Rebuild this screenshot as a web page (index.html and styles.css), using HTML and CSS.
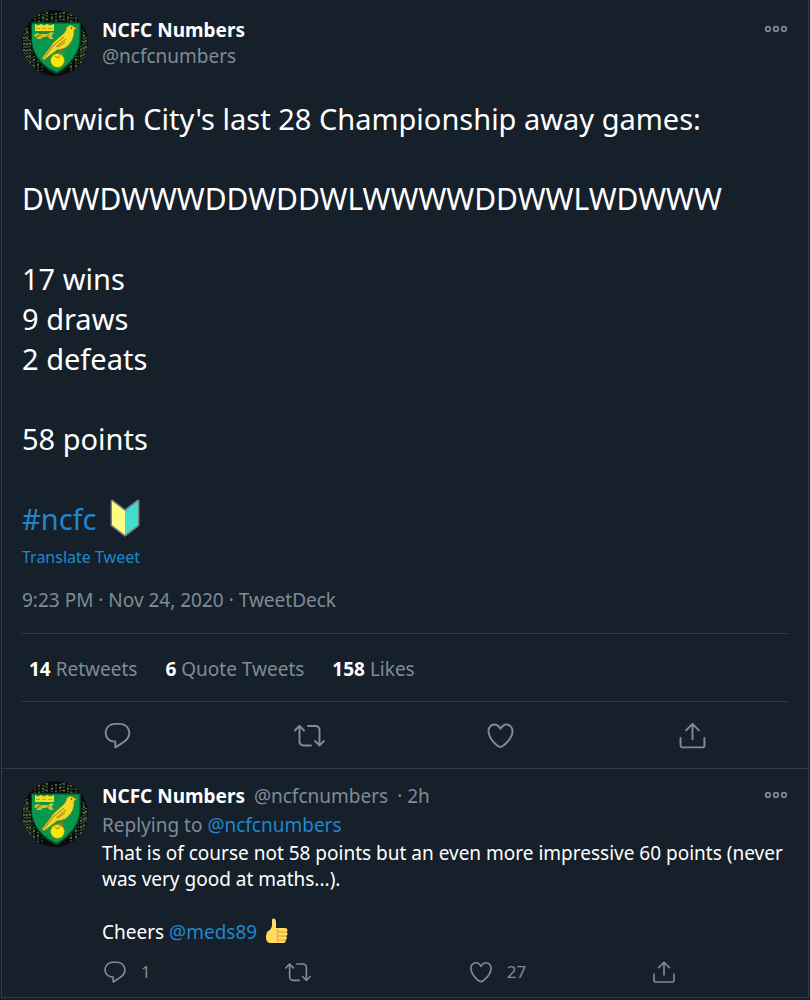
FILE: index.html
```html
<!DOCTYPE html>
<html lang="en">
<head>
<meta charset="utf-8">
<meta name="viewport" content="width=device-width, initial-scale=1">
<title>NCFC Numbers</title>
<link rel="stylesheet" href="styles.css">
</head>
<body>
<svg class="sprite" aria-hidden="true">
  <defs>
    <symbol id="reply" viewBox="0 0 24 24"><path d="M14.046 2.242l-4.148-.01h-.002c-4.374 0-7.8 3.427-7.8 7.802 0 4.098 3.186 7.206 7.465 7.37v3.828c0 .108.044.286.12.403.142.225.384.347.632.347.138 0 .277-.038.402-.118.264-.168 6.473-4.14 8.088-5.506 1.902-1.61 3.04-3.97 3.043-6.312v-.017c-.006-4.367-3.43-7.787-7.8-7.788zm3.787 12.972c-1.134.96-4.862 3.405-6.772 4.643V16.67c0-.414-.335-.75-.75-.75h-.396c-3.66 0-6.318-2.476-6.318-5.886 0-3.534 2.768-6.302 6.3-6.302l4.147.01h.002c3.532 0 6.3 2.766 6.302 6.296-.003 1.91-.942 3.844-2.514 5.176z"/></symbol>
    <symbol id="retweet" viewBox="0 0 24 24"><path d="M23.77 15.67c-.292-.293-.767-.293-1.06 0l-2.22 2.22V7.65c0-2.068-1.683-3.75-3.75-3.75h-5.85c-.414 0-.75.336-.75.75s.336.75.75.75h5.85c1.24 0 2.25 1.01 2.25 2.25v10.24l-2.22-2.22c-.293-.293-.768-.293-1.06 0s-.294.768 0 1.06l3.5 3.5c.145.147.337.22.53.22s.383-.072.53-.22l3.5-3.5c.294-.292.294-.767 0-1.06zm-10.66 3.28H7.26c-1.24 0-2.25-1.01-2.25-2.25V6.46l2.22 2.22c.148.147.34.22.532.22s.384-.073.53-.22c.293-.293.293-.768 0-1.06l-3.5-3.5c-.293-.294-.768-.294-1.06 0l-3.5 3.5c-.294.292-.294.767 0 1.06s.767.293 1.06 0l2.22-2.22V16.7c0 2.068 1.683 3.75 3.75 3.75h5.85c.414 0 .75-.336.75-.75s-.337-.75-.75-.75z"/></symbol>
    <symbol id="like" viewBox="0 0 24 24"><path d="M12 21.638h-.014C9.403 21.59 1.95 14.856 1.95 8.478c0-3.064 2.525-5.754 5.403-5.754 2.29 0 3.83 1.58 4.646 2.73.814-1.148 2.354-2.73 4.645-2.73 2.88 0 5.404 2.69 5.404 5.755 0 6.376-7.454 13.11-10.037 13.157H12zM7.354 4.225c-2.08 0-3.903 1.988-3.903 4.255 0 5.74 7.034 11.596 8.55 11.658 1.518-.062 8.55-5.917 8.55-11.658 0-2.267-1.823-4.255-3.903-4.255-2.528 0-3.94 2.936-3.952 2.965-.23.562-1.156.562-1.387 0-.014-.03-1.425-2.965-3.954-2.965z"/></symbol>
    <symbol id="share" viewBox="0 0 24 24"><path d="M17.53 7.47l-5-5c-.293-.293-.768-.293-1.06 0l-5 5c-.294.293-.294.768 0 1.06s.767.294 1.06 0l3.72-3.72V15c0 .414.336.75.75.75s.75-.336.75-.75V4.81l3.72 3.72c.146.147.338.22.53.22s.384-.072.53-.22c.293-.293.293-.767 0-1.06z"/><path d="M19.708 21.944H4.292C3.028 21.944 2 20.916 2 19.652V14c0-.414.336-.75.75-.75s.75.336.75.75v5.652c0 .437.355.792.792.792h15.416c.437 0 .792-.355.792-.792V14c0-.414.336-.75.75-.75s.75.336.75.75v5.652c0 1.264-1.028 2.292-2.292 2.292z"/></symbol>
    <symbol id="more" viewBox="0 0 24 8"><g fill="none" stroke="currentColor" stroke-width="1.7"><circle cx="4" cy="4" r="2.3"/><circle cx="12" cy="4" r="2.3"/><circle cx="20" cy="4" r="2.3"/></g></symbol>
    <clipPath id="round"><circle cx="33" cy="33" r="33"/></clipPath>
    <symbol id="crest" viewBox="0 0 66 66">
      <g clip-path="url(#round)">
        <rect width="66" height="66" fill="#080d0b"/>
        <g fill="none" stroke="#6d8a50" stroke-width="1.4">
          <path stroke-dasharray="2 1.5 1 2" d="M13 5v8M17 4v9M25 2v9M34 3v9M42 2v10M49 4v9M54 7v6"/>
          <path stroke-dasharray="1 1.6 2.4 1.2" d="M21 4v8M30 4v7M38 3v8M46 4v8M2 24v26M5 18v33M8 30v26M12 46v14M62 22v32M59 36v24M64 27v15M54 46v14M16 51v10M49 53v9"/>
          <path stroke="#34543a" stroke-dasharray="1.5 2" d="M3.500 19v32M6.500 22v33M10 40v18M60.500 20v38M56.500 42v18M20 56v8M23 1v9M51 4v8M40 2v8"/>
        </g>
        <path d="M9 12H59V29C59 44 47 58 35 64C22 60 9 46 9 29Z" fill="#07422a"/>
        <path d="M10 13.500H57.500V29C57.500 43 46 56 35 62C23 58 10 45 10 29Z" fill="#08984d"/>
        <path d="M13 14l3 1.500 3-1.500 3 1.500 3-1.500 3 1.500 4-1.500v7H13z" fill="#f1dc20"/>
        <path d="M14 18.500h4m2 0h4m2 0h4" stroke="#b5971d" stroke-width=".8"/>
        <path d="M12 25l3-2 3 1h8l3-2 3 1-2 2v2l2 2h-4l-2-2h-5l-2 2h-5l3-3-4 1z" fill="#d5bd22"/>
        <path d="M15 26l4-1M23 28l4-3" stroke="#765b16" stroke-width=".8"/>
        <path d="M44 20C44 15 50 14 52 17L55 18 52 20C53 28 48 36 41 39L35 40 22 50 20 48 29 36C32 30 41 26 44 20Z" fill="#f0dc24" stroke="#8a7415" stroke-width=".7"/>
        <path d="M42 27L31 36 22 48M44 29L34 37M43 32L36 37" fill="none" stroke="#9b8116"/>
        <circle cx="49.500" cy="18" r=".8" fill="#222"/>
        <path d="M38 39l-2 5M41 38l-2 5 4 1m-10 0l6-1" stroke="#b86c22" fill="none"/>
        <circle cx="35.500" cy="50.500" r="7" fill="#f8e80f" stroke="#877c19" stroke-width=".6"/>
        <path d="M33 46l3 2 2-3" fill="none" stroke="#9d7615"/>
      </g>
    </symbol>
  </defs>
</svg>
<main class="thread">
  <article class="tweet">
    <header class="author">
      <svg class="avatar" role="img" aria-label="NCFC Numbers avatar"><use href="#crest"/></svg>
      <div class="identity">
        <a class="name" href="#">NCFC Numbers</a>
        <a class="handle" href="#">@ncfcnumbers</a>
      </div>
      <button class="more" aria-label="More"><svg><use href="#more"/></svg></button>
    </header>
    <p class="body">Norwich City's last 28 Championship away games:<br><br><span class="results">DWWDWWWDDWDDWLWWWWDDWWLWDWWW</span><br><br>17 wins<br>9 draws<br>2 defeats<br><br>58 points<br><br><a href="#">#ncfc</a> <svg class="leaf" viewBox="0 0 30 38" role="img" aria-label="Beginner leaf"><path d="M2 2L15 12 28 2V26L15 36 2 26Z" fill="none" stroke="#717a7d" stroke-width="3" stroke-linejoin="round"/><path d="M2 2L15 12V36L2 26Z" fill="#fffb83"/><path d="M28 2L15 12V36L28 26Z" fill="#43ddcf"/></svg></p>
    <button class="translate">Translate Tweet</button>
    <p class="meta"><a href="#">9:23 PM · Nov 24, 2020</a> · <a href="#">TweetDeck</a></p>
    <div class="stats">
      <a href="#"><b>14</b> Retweets</a>
      <a href="#"><b>6</b> Quote Tweets</a>
      <a href="#"><b>158</b> Likes</a>
    </div>
    <div class="actions">
      <button aria-label="Reply"><svg><use href="#reply"/></svg></button>
      <button aria-label="Retweet"><svg><use href="#retweet"/></svg></button>
      <button aria-label="Like"><svg><use href="#like"/></svg></button>
      <button aria-label="Share"><svg><use href="#share"/></svg></button>
    </div>
  </article>
  <article class="response">
    <svg class="avatar" role="img" aria-label="NCFC Numbers avatar"><use href="#crest"/></svg>
    <div class="content">
      <header class="byline">
        <p><a class="name" href="#">NCFC Numbers</a><a class="handle" href="#">@ncfcnumbers</a><span class="handle">· 2h</span></p>
        <button class="more" aria-label="More"><svg><use href="#more"/></svg></button>
      </header>
      <p class="replying">Replying to <a href="#">@ncfcnumbers</a></p>
      <p class="text">That is of course not 58 points but an even more impressive 60 points (never was very good at maths...).<br><br>Cheers <a href="#">@meds89</a> <svg class="thumb" viewBox="0 0 24 26" role="img" aria-label="Thumbs up"><path d="M2 14C5 12 7 10 7 7L7 2C8-.5 11 .5 11 4V10H13V25H5C2 25 1 22 1 18Z" fill="#ffdb5e"/><path d="M11 10H20C23 10 23 13.500 21.500 14 23 15 23 17.500 21 18 22.500 19 22 21.500 20.500 22 21.500 24 20 25 18 25H9C5 25 4 22 5 18L9 12Z" fill="#ffdb5e"/><path d="M13 14H21.500M13 18H21M13 22H20.500M13 11C12 12 12 13 13 14 12 15 12 17 13 18 12 19 12 21 13 22 12 23 13 24 14 25" fill="none" stroke="#ee9547"/></svg></p>
      <div class="actions small">
        <button aria-label="1 reply"><svg><use href="#reply"/></svg><span>1</span></button>
        <button aria-label="Retweet"><svg><use href="#retweet"/></svg></button>
        <button aria-label="27 likes"><svg><use href="#like"/></svg><span>27</span></button>
        <button aria-label="Share"><svg><use href="#share"/></svg></button>
      </div>
    </div>
  </article>
</main>
</body>
</html>
```
FILE: styles.css
```css
:root {
  --bg: #16202a;
  --line: #303b45;
  --muted: #7f8b97;
  --link: #2087cd;
}

* { box-sizing: border-box; }

body {
  margin: 0;
  background: var(--bg);
  color: #fff;
  font: 19px/26px "Noto Sans", "Open Sans", sans-serif;
}

p { margin: 0; }
a { color: var(--link); text-decoration: none; }

button {
  padding: 0;
  border: 0;
  background: none;
  color: var(--muted);
  font: inherit;
  cursor: pointer;
}

svg { display: block; fill: currentColor; }

.sprite { position: absolute; width: 0; height: 0; }

.thread {
  margin: 0 1px;
  border: solid var(--line);
  border-width: 0 1px 1px;
}

.tweet { padding: 10px 20px 0; }

.author { display: flex; gap: 14px; }

.avatar { width: 66px; height: 66px; flex: none; }

.identity {
  display: flex;
  flex: 1;
  flex-direction: column;
  padding-top: 7px;
}

.name { color: #fff; font-weight: 700; }
.handle { color: var(--muted); }

.more { align-self: flex-start; padding: 15px 0; }
.more svg { width: 24px; height: 8px; }

.body {
  margin-top: 23px;
  font-size: 29px;
  line-height: 40px;
}

.results { font-size: 30px; }

.leaf {
  display: inline-block;
  width: 30px;
  height: 38px;
  margin-left: 6px;
  vertical-align: -7px;
}

.translate {
  display: block;
  margin-top: 5px;
  color: var(--link);
  font-size: 16px;
  line-height: 26px;
}

.meta { margin-top: 17px; color: var(--muted); }
.meta a { color: inherit; }

.stats {
  display: flex;
  gap: 28px;
  margin-top: 20px;
  padding: 22px 7px 19px;
  border: solid var(--line);
  border-width: 1px 0;
}

.stats a { color: var(--muted); }
.stats b { color: #fff; }

.actions { display: grid; grid-template-columns: repeat(4, 1fr); }

.actions button {
  display: flex;
  align-items: center;
  justify-content: center;
  height: 66px;
}

.actions svg { width: 31px; height: 31px; }

.response {
  display: flex;
  gap: 14px;
  padding: 12px 20px 12px;
  border-top: 1px solid var(--line);
}

.content { flex: 1; min-width: 0; padding-top: 2px; }

.byline { display: flex; justify-content: space-between; }
.byline p { display: flex; gap: 9px; }
.byline .more { padding: 8px 0; }

.replying { margin: 3px 0 2px; color: var(--muted); }

.thumb {
  display: inline-block;
  width: 24px;
  height: 26px;
  margin-left: 3px;
  vertical-align: -5px;
}

.actions.small {
  grid-template-columns: 4fr 4fr 4fr 3fr;
  margin-top: 14px;
}

.small button { justify-content: flex-start; gap: 13px; height: 26px; font-size: 17px; }
.small svg { width: 26px; height: 26px; }
```
